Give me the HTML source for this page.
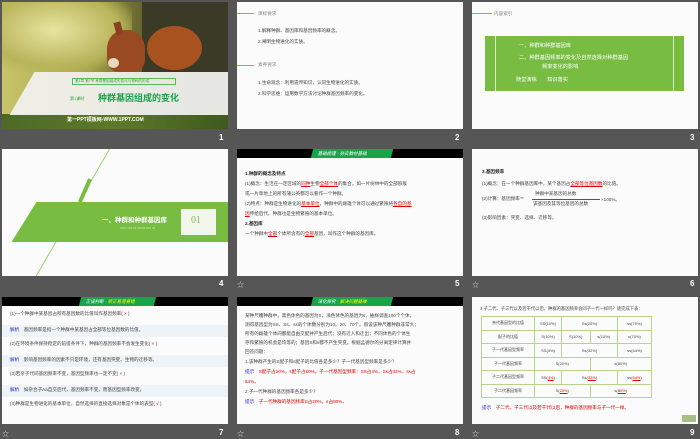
<!DOCTYPE html>
<html><head><meta charset="utf-8"><style>
*{margin:0;padding:0;box-sizing:border-box}
body{width:700px;height:438px;background:#565656;position:relative;overflow:hidden;font-family:"Liberation Sans","Noto Sans CJK SC",sans-serif}
.s{position:absolute;width:226px;height:127px;background:#fbfbfb;overflow:hidden}
.n{position:absolute;color:#fff;font-size:8px;font-weight:bold}
.st{position:absolute;color:#ddd;font-size:7px}
.t{position:absolute;font-size:4.6px;color:#444;white-space:nowrap;line-height:1}
.r{color:#d00}
.u{color:#d00;text-decoration:underline}
.b{color:#22c}
.bar{position:absolute;left:0;top:0;width:226px;height:9px;background:#000}
.tab{position:absolute;top:0;height:9px;background:#1aa34a;color:#fff;font-size:4.5px;line-height:9px;padding-left:6px;transform:skewX(-15deg)}
table{border-collapse:collapse;position:absolute;left:9px;top:19px;font-size:4px;color:#444}
td{border:1px solid #b8d48a;height:13.5px;text-align:center;padding:0 2px}
</style></head><body>

<!-- slide 1 -->
<div class="s" style="left:2px;top:2px;background:linear-gradient(90deg,#c9c46a 0%,#a9a84a 35%,#6a6a30 60%,#3d3b22 75%,#2e2d1c 100%)">
 <div style="position:absolute;left:0;top:0;width:130px;height:70px;background:radial-gradient(ellipse at 40% 40%,#e8e4a0,#b8b45a 60%,transparent 80%)"></div>
 <div style="position:absolute;left:140px;top:0;width:90px;height:70px;background:#3a3a26"></div>
 <div style="position:absolute;left:145px;top:24px;width:55px;height:44px;border-radius:50%;background:#a8521f"></div>
 <div style="position:absolute;left:105px;top:28px;width:38px;height:42px;border-radius:45% 45% 30% 30%;background:#9a4a22"></div>
 <div style="position:absolute;left:113px;top:20px;width:7px;height:13px;background:#8a4020;transform:rotate(-15deg)"></div>
 <div style="position:absolute;left:106px;top:56px;width:11px;height:10px;border-radius:50%;background:#e8d8c0"></div>
 <div style="position:absolute;left:0;top:112px;width:226px;height:15px;background:linear-gradient(90deg,#4c6a24,#5d7a2a,#3e5a1e)"></div>
 <div style="position:absolute;left:20px;top:70px;width:230px;height:43px;background:rgba(240,240,238,.95);transform:skewX(-30deg)"></div>
 <div style="position:absolute;left:70px;top:76px;width:104px;height:7px;border:1px solid #5bb85b;font-size:3.6px;color:#3a9a3a;line-height:5px;padding-left:2px;white-space:nowrap">第1章 第7节 种群基因组成的变化与物种的形成</div>
 <div class="t" style="left:68px;top:95px;font-size:4px;color:#2a9a3a">第1课时</div>
 <div class="t" style="left:96px;top:92px;font-size:9px;font-weight:bold;color:#1aa34a">种群基因组成的变化</div>
 <div class="t" style="left:65px;top:116px;font-size:5px;color:#fff;font-weight:bold">第一PPT模板网-WWW.1PPT.COM</div>
</div>
<div class="n" style="left:219px;top:133px">1</div>

<!-- slide 2 -->
<div class="s" style="left:237px;top:2px">
 <div style="position:absolute;left:0;top:11px;width:17px;height:1px;background:#7dc24a"></div>
 <div class="t" style="left:21px;top:10px;color:#888">课标要求</div>
 <div class="t" style="left:21px;top:27px">1.解释种群、基因库和基因频率的概念。</div>
 <div class="t" style="left:21px;top:38px">2.阐明生物进化的实质。</div>
 <div style="position:absolute;left:0;top:63px;width:17px;height:1px;background:#7dc24a"></div>
 <div class="t" style="left:21px;top:61px;color:#888">素养要求</div>
 <div class="t" style="left:21px;top:79px">1.生命观念：利用遗传知识，认同生物进化的实质。</div>
 <div class="t" style="left:21px;top:90px">2.科学思维：运用数学方法讨论种群基因频率的变化。</div>
</div>
<div class="n" style="left:455px;top:133px">2</div>

<!-- slide 3 -->
<div class="s" style="left:472px;top:2px">
 <div style="position:absolute;left:0;top:11px;width:20px;height:1px;background:#7dc24a"></div>
 <div class="t" style="left:22px;top:10px;color:#888">内容索引</div>
 <div style="position:absolute;left:13px;top:34px;width:199px;height:55px;background:#78bd42"></div>
 <div style="position:absolute;left:23px;top:34px;width:1px;height:55px;background:#d8ecc8"></div>
 <div style="position:absolute;left:201px;top:34px;width:1px;height:55px;background:#d8ecc8"></div>
 <div class="t" style="left:47px;top:42px;color:#fff;font-size:5.2px">一、种群和种群基因库</div>
 <div class="t" style="left:47px;top:54px;color:#fff;font-size:5.2px">二、种群基因频率的变化及自然选择对种群基因</div>
 <div class="t" style="left:70px;top:63px;color:#fff;font-size:5.2px">频率变化的影响</div>
 <div class="t" style="left:44px;top:76px;color:#fff;font-size:5.2px">随堂演练　　知识落实</div>
</div>
<div class="n" style="left:690px;top:133px">3</div>

<!-- slide 4 -->
<div class="s" style="left:2px;top:149px">
 <div style="position:absolute;left:107px;top:0;width:1px;height:150px;background:#9fd06a;transform:rotate(30deg);transform-origin:top left"></div>
 <div style="position:absolute;left:81px;top:29px;width:4px;height:25px;background:#78bd42;transform:rotate(24deg)"></div>
 <div style="position:absolute;left:22px;top:53px;width:230px;height:40px;background:#78bd42;transform:skewX(-32deg)"></div>
 <div class="t" style="left:100px;top:69px;color:#fff;font-size:6.5px;font-weight:bold">一、种群和种群基因库</div>
 <div class="t" style="left:118px;top:79px;color:#d8ecc8;font-size:2.5px">XXXX XXX XX XXXXX XXX XX</div>
 <div style="position:absolute;left:179px;top:60px;width:35px;height:26px;background:#f2f6ea"></div>
 <div class="t" style="left:189px;top:67px;color:#8ab860;font-size:10px;font-family:'Liberation Serif',serif">01</div>
</div>
<div class="n" style="left:219px;top:279px">4</div>
<div class="st" style="left:237px;top:280px">☆</div>

<!-- slide 5 -->
<div class="s" style="left:237px;top:149px">
 <div class="bar"></div><div class="tab" style="left:75px;width:80px">基础梳理 · 夯实教材基础</div>
 <div class="t" style="left:8px;top:23px;font-weight:bold;color:#222">1.种群的概念及特点</div>
 <div class="t" style="left:8px;top:33px">(1)概念：生活在一定区域的<span class="u">同种</span>生物<span class="u">全部个体</span>的集合。如一片树林中的全部猕猴</div>
 <div class="t" style="left:8px;top:43px">或一片草地上的所有蒲公英都可以看作一个种群。</div>
 <div class="t" style="left:8px;top:53px">(2)特点：种群是生物进化的<span class="u">基本单位</span>，种群中的雌雄个体可以通过繁殖将<span class="u">各自的基</span></div>
 <div class="t" style="left:8px;top:63px"><span class="u">因</span>传给后代。种群也是生物繁殖的基本单位。</div>
 <div class="t" style="left:8px;top:73px;font-weight:bold;color:#222">2.基因库</div>
 <div class="t" style="left:8px;top:83px">一个种群中<span class="u">全部</span>个体所含有的<span class="u">全部</span>基因，叫作这个种群的基因库。</div>
</div>
<div class="n" style="left:455px;top:279px">5</div>
<div class="st" style="left:472px;top:280px">☆</div>

<!-- slide 6 -->
<div class="s" style="left:472px;top:149px">
 <div class="t" style="left:10px;top:21px;font-weight:bold;color:#222">3.基因频率</div>
 <div class="t" style="left:10px;top:33px">(1)概念：在一个种群基因库中，某个基因占<span class="u">全部等位基因数</span>的比值。</div>
 <div class="t" style="left:10px;top:48px">(2)计算：基因频率＝</div>
 <div class="t" style="left:63px;top:43px">种群中某基因的总数</div>
 <div style="position:absolute;left:60px;top:50px;width:68px;height:1px;background:#555"></div>
 <div class="t" style="left:61px;top:53px">该基因及其等位基因的总数</div>
 <div class="t" style="left:129px;top:49px">×100%。</div>
 <div class="t" style="left:10px;top:67px">(3)影响因素：突变、选择、迁移等。</div>
</div>
<div class="n" style="left:690px;top:279px">6</div>

<!-- slide 7 -->
<div class="s" style="left:2px;top:297px">
 <div class="bar"></div><div class="tab" style="left:78px;width:75px;color:#fff">正误判断 · <span style="color:#ff0">矫正易混易错</span></div>
 <div style="position:absolute;left:0;top:28px;width:226px;height:12px;background:#eef3f7"></div>
 <div style="position:absolute;left:0;top:58px;width:226px;height:12px;background:#eef3f7"></div>
 <div style="position:absolute;left:0;top:88px;width:226px;height:12px;background:#eef3f7"></div>
 <div class="t" style="left:8px;top:15px">(1)一个种群中某基因占所有基因数的比值叫作基因频率( <span class="r">×</span> )</div>
 <div class="t" style="left:8px;top:31px"><span class="b">解析</span>　基因频率是指一个种群中某基因占全部等位基因数的比值。</div>
 <div class="t" style="left:8px;top:45px">(2)在环境条件保持稳定的前提条件下，种群的基因频率不会发生变化( <span class="r">×</span> )</div>
 <div class="t" style="left:8px;top:61px"><span class="b">解析</span>　影响基因频率的因素不只是环境，还有基因突变、生物的迁移等。</div>
 <div class="t" style="left:8px;top:75px">(3)若亲子代间基因频率不变，基因型频率也一定不变( <span class="r">×</span> )</div>
 <div class="t" style="left:8px;top:91px"><span class="b">解析</span>　如杂合子Aa自交后代，基因频率不变，而基因型频率改变。</div>
 <div class="t" style="left:8px;top:105px">(4)种群是生物进化的基本单位，自然选择的直接选择对象是个体的表型( <span class="r">√</span> )</div>
</div>
<div class="n" style="left:219px;top:428px">7</div>
<div class="st" style="left:2px;top:429px">☆</div>

<!-- slide 8 -->
<div class="s" style="left:237px;top:297px">
 <div class="bar"></div><div class="tab" style="left:75px;width:80px">深化探究 · <span style="color:#ff0">解决问题疑难</span></div>
 <div class="t" style="left:8px;top:17px">某种尺蠖种群中，黑色体色的基因为S，浅色体色的基因为s，抽样调查100个个体，</div>
 <div class="t" style="left:8px;top:26px">测得基因型为SS、Ss、ss的个体数分别为10、20、70个。假设该种尺蠖种群非常大；</div>
 <div class="t" style="left:8px;top:35px">所有的雌雄个体间都能自由交配并产生后代；没有迁入和迁出；不同体色的个体生</div>
 <div class="t" style="left:8px;top:44px">存和繁殖的机会是均等的；基因S和s都不产生突变。根据孟德尔的分离定律计算并</div>
 <div class="t" style="left:8px;top:53px">回答问题：</div>
 <div class="t" style="left:8px;top:63px">1.该种群产生的S配子和s配子的比值各是多少？子一代基因型频率是多少？</div>
 <div class="t r" style="left:8px;top:73px"><span class="b">提示</span>　S配子占20%，s配子占80%。子一代基因型频率：SS占4%，Ss占32%，ss占</div>
 <div class="t r" style="left:8px;top:83px">64%。</div>
 <div class="t" style="left:8px;top:93px">2.子一代种群的基因频率各是多少？</div>
 <div class="t r" style="left:8px;top:103px"><span class="b">提示</span>　子一代种群的基因频率S占20%，s占80%。</div>
</div>
<div class="n" style="left:455px;top:428px">8</div>
<div class="st" style="left:237px;top:429px">☆</div>

<!-- slide 9 -->
<div class="s" style="left:472px;top:297px">
 <div class="t" style="left:8px;top:10px;font-size:4.3px">3.子二代、子三代以及若干代以后，种群的基因频率会同子一代一样吗？请完成下表：</div>
 <table>
  <tr><td style="width:53px">亲代基因型的比值</td><td style="width:27px">SS(10%)</td><td colspan="2" style="width:56px">Ss(20%)</td><td style="width:34px">ss(70%)</td></tr>
  <tr><td>配子的比值</td><td>S(10%)</td><td>S(10%)</td><td>s(10%)</td><td>s(70%)</td></tr>
  <tr><td>子一代基因型频率</td><td>SS(4%)</td><td colspan="2">Ss(32%)</td><td>ss(64%)</td></tr>
  <tr><td>子一代基因频率</td><td colspan="2">S(20%)</td><td colspan="2">s(80%)</td></tr>
  <tr><td>子二代基因型频率</td><td>SS(<span class="u">4%</span>)</td><td colspan="2">Ss(<span class="u">32%</span>)</td><td>ss(<span class="u">64%</span>)</td></tr>
  <tr><td>子二代基因频率</td><td colspan="2">S(<span class="u">20%</span>)</td><td colspan="2">s(<span class="u">80%</span>)</td></tr>
 </table>
 <div class="t r" style="left:10px;top:109px"><span class="b">提示</span>　子二代、子三代以及若干代以后，种群的基因频率与子一代一样。</div>
 <div style="position:absolute;left:210px;top:118px;width:14px;height:7px;background:#a8c088"></div>
</div>
<div class="n" style="left:690px;top:428px">9</div>
<div class="st" style="left:472px;top:429px">☆</div>
</body></html>
